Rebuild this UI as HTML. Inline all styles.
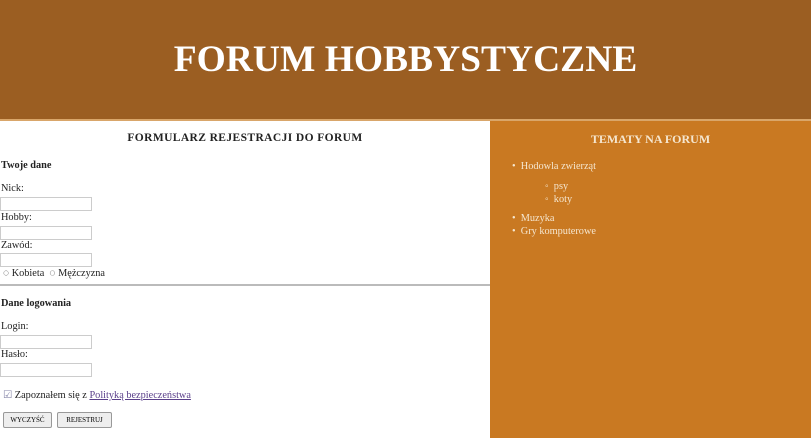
<!DOCTYPE html>
<html><head><style>
body{margin:0;width:811px;height:438px;overflow:hidden;font-family:"Liberation Serif",serif;background:#fff;position:relative}
#hdr{position:absolute;left:0;top:0;width:811px;height:119px;background:#9b5e22;border-bottom:2px solid #d9a66a;color:#fff;font-weight:bold;font-size:37.5px;text-align:center;line-height:119px}
#left{position:absolute;left:0;top:121px;width:490px;height:317px;font-size:10.3px;color:#222}
#right{position:absolute;left:490px;top:121px;width:321px;height:317px;background:#c97922;color:#f5e6cf;font-size:10.3px}
.t{position:absolute;font-weight:bold}
.a{position:absolute}
.in{position:absolute;left:0;width:92px;height:14px;border:1px solid #ccc;box-sizing:border-box;background:#fff}
.btn{position:absolute;top:412px;height:16px;border:1px solid #999;background:#eee;font-size:7px;line-height:14px;text-align:center;box-sizing:border-box;border-radius:2px}
</style></head><body>
<div id="hdr">FORUM HOBBYSTYCZNE</div>
<div id="left">
<div class="t" style="left:0;width:490px;text-align:center;top:11px;font-size:11.5px;letter-spacing:.4px">FORMULARZ REJESTRACJI DO FORUM</div>
<div class="t" style="left:1px;top:39px">Twoje dane</div>
<div class="a" style="left:1px;top:62px">Nick:</div>
<div class="in" style="top:76px"></div>
<div class="a" style="left:1px;top:91px">Hobby:</div>
<div class="in" style="top:105px"></div>
<div class="a" style="left:1px;top:119px">Zawód:</div>
<div class="in" style="top:132px"></div>
<div class="a" style="left:3px;top:147px">◌ Kobieta &nbsp;◌ Mężczyzna</div>
<div class="a" style="left:0;top:163px;width:490px;height:2px;background:#bbb"></div>
<div class="t" style="left:1px;top:177px">Dane logowania</div>
<div class="a" style="left:1px;top:200px">Login:</div>
<div class="in" style="top:214px"></div>
<div class="a" style="left:1px;top:228px">Hasło:</div>
<div class="in" style="top:242px"></div>
<div class="a" style="left:3px;top:268px"><span style="color:#88a">☑</span> Zapoznałem się z <span style="color:#5a3f8a;text-decoration:underline">Polityką bezpieczeństwa</span></div>
</div>
<div class="btn" style="left:3px;width:49px">WYCZYŚĆ</div>
<div class="btn" style="left:57px;width:55px">REJESTRUJ</div>
<div id="right">
<div class="t" style="left:0;width:321px;text-align:center;top:11px;font-size:12px">TEMATY NA FORUM</div>
<div class="a" style="left:22px;top:40px">•&nbsp; Hodowla zwierząt</div>
<div class="a" style="left:55px;top:60px">◦&nbsp; psy</div>
<div class="a" style="left:55px;top:73px">◦&nbsp; koty</div>
<div class="a" style="left:22px;top:92px">•&nbsp; Muzyka</div>
<div class="a" style="left:22px;top:105px">•&nbsp; Gry komputerowe</div>
</div>
</body></html>
